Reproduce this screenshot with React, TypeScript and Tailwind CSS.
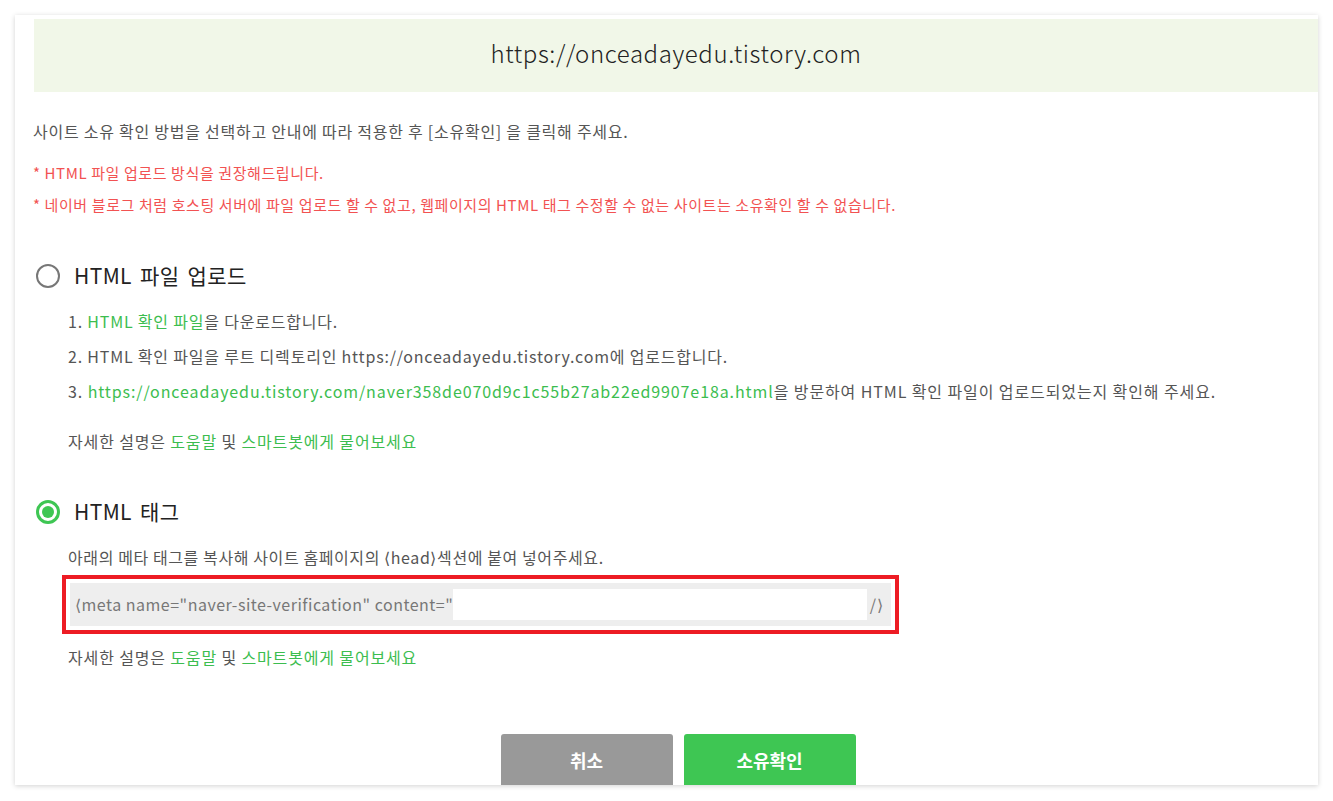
import React from "react";

const font = { fontFamily: '"Noto Sans CJK KR", "Noto Sans", sans-serif' };

function Radio({ checked }: { checked?: boolean }) {
  if (checked) {
    return (
      <span className="flex h-[24px] w-[24px] items-center justify-center rounded-full border-[3px] border-[#3ec653]">
        <span className="h-[12px] w-[12px] rounded-full bg-[#3ec653]" />
      </span>
    );
  }
  return <span className="h-[24px] w-[24px] rounded-full border-2 border-[#777]" />;
}

function Angle({ children }: { children: React.ReactNode }) {
  return <span className="font-['DejaVu_Sans'] text-[16px] font-light">{children}</span>;
}

function Help() {
  return (
    <p className="ml-[35px] h-[24px] leading-[24px] tracking-[0.85px] text-[#555]">
      자세한 설명은 <span className="text-[#3cbd4f]">도움말</span> 및{" "}
      <span className="text-[#3cbd4f]">스마트봇에게 물어보세요</span>
    </p>
  );
}

export default function App() {
  return (
    <div className="min-h-screen bg-white pt-[15px]" style={font}>
      <div className="mx-[15px] h-[770px] overflow-hidden bg-white shadow-[0_1px_5px_rgba(0,0,0,0.18)]">
        <div className="ml-[19px] mt-[4px] flex h-[73px] items-center justify-center bg-[#f1f7e8] pb-[5px] text-[24px] font-light tracking-[0.6px] text-[#222]">
          https://onceadayedu.tistory.com
        </div>

        <div className="pl-[18px] text-[16px] tracking-[0.8px]">
          <p className="mt-[27px] h-[24px] text-[16px] leading-[24px] tracking-[0.75px] text-[#555]">
            사이트 소유 확인 방법을 선택하고 안내에 따라 적용한 후 [소유확인] 을 클릭해 주세요.
          </p>
          <div className="mt-[14px] text-[15px] leading-[32px] tracking-[0.6px] text-[#f25252]">
            <p>* HTML 파일 업로드 방식을 권장해드립니다.</p>
            <p>* 네이버 블로그 처럼 호스팅 서버에 파일 업로드 할 수 없고, 웹페이지의 HTML 태그 수정할 수 없는 사이트는 소유확인 할 수 없습니다.</p>
          </div>

          <div className="ml-[3px] mt-[40px] flex h-[30px] items-center gap-[14px]">
            <Radio />
            <span className="text-[21px] tracking-[0.4px] text-[#222] [word-spacing:3px]">HTML 파일 업로드</span>
          </div>
          <div className="ml-[35px] mt-[13px] text-[#555]">
            <p className="h-[35px] leading-[35px]">
              1. <span className="text-[#3cbd4f]">HTML 확인 파일</span>을 다운로드합니다.
            </p>
            <p className="h-[35px] leading-[35px]">
              2. HTML 확인 파일을 루트 디렉토리인 https://onceadayedu.tistory.com에 업로드합니다.
            </p>
            <p className="h-[35px] whitespace-nowrap leading-[35px] tracking-[0.9px]">
              3.{" "}
              <span className="text-[#3cbd4f]">
                https://onceadayedu.tistory.com/naver358de070d9c1c55b27ab22ed9907e18a.html
              </span>
              을 방문하여 HTML 확인 파일이 업로드되었는지 확인해 주세요.
            </p>
          </div>
          <div className="mt-[20px]">
            <Help />
          </div>

          <div className="ml-[3px] mt-[44px] flex h-[30px] items-center gap-[14px]">
            <Radio checked />
            <span className="text-[21px] tracking-[0.4px] text-[#222] [word-spacing:3px]">HTML 태그</span>
          </div>
          <p className="ml-[35px] mt-[18px] h-[24px] leading-[24px] tracking-[0.6px] text-[#555]">
            아래의 메타 태그를 복사해 사이트 홈페이지의 <Angle>⟨</Angle>head<Angle>⟩</Angle>섹션에 붙여 넣어주세요.
          </p>
          <div className="ml-[29px] mt-[6px] w-[837px] border-[4px] border-[#ed1c24] p-[4px]">
            <div className="flex h-[43px] items-center bg-[#eeeeee] pl-[5px] pr-[8px] tracking-[0.5px] text-[#777]">
              <span className="whitespace-nowrap">
                <Angle>⟨</Angle>meta name="naver-site-verification" content="
              </span>
              <span className="h-[31px] flex-1 bg-white" />
              <span className="ml-[3px]">
                /<Angle>⟩</Angle>
              </span>
            </div>
          </div>
          <div className="mt-[11px]">
            <Help />
          </div>
        </div>

        <div className="mt-[65px] flex justify-center gap-[11px] pl-[23px]">
          <button className="flex h-[56px] w-[172px] items-start justify-center rounded-t-[3px] bg-[#999999] pt-[13px] text-[18px] font-bold text-white">
            취소
          </button>
          <button className="flex h-[56px] w-[172px] items-start justify-center rounded-t-[3px] bg-[#3ec653] pt-[13px] text-[18px] font-bold text-white">
            소유확인
          </button>
        </div>
      </div>
    </div>
  );
}
